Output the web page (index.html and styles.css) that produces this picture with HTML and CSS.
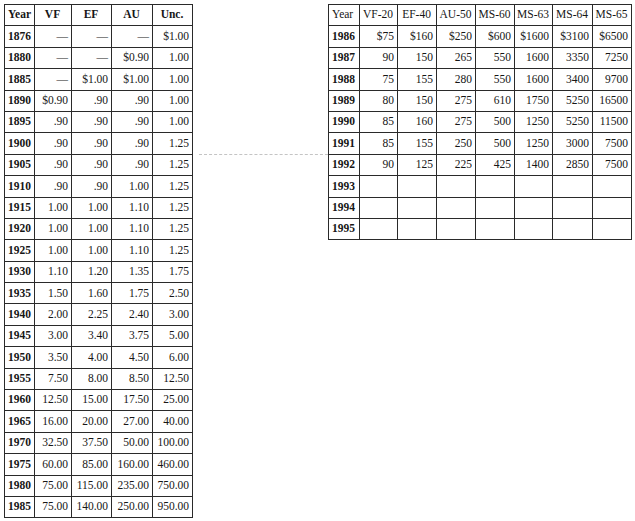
FILE: index.html
```html
<!DOCTYPE html>
<html>
<head>
<meta charset="utf-8">
<link rel="stylesheet" href="styles.css">
</head>
<body>
<div class="page">
  <table class="grid left">
    <colgroup><col class="c-year"><col class="c36"><col class="c40"><col class="c41"><col class="c40"></colgroup>
    <thead><tr><th class="yr">Year</th><th>VF</th><th>EF</th><th>AU</th><th>Unc.</th></tr></thead>
    <tbody>
      <tr><th class="yr">1876</th><td>—</td><td>—</td><td>—</td><td>$1.00</td></tr>
      <tr><th class="yr">1880</th><td>—</td><td>—</td><td>$0.90</td><td>1.00</td></tr>
      <tr><th class="yr">1885</th><td>—</td><td>$1.00</td><td>$1.00</td><td>1.00</td></tr>
      <tr><th class="yr">1890</th><td>$0.90</td><td>.90</td><td>.90</td><td>1.00</td></tr>
      <tr><th class="yr">1895</th><td>.90</td><td>.90</td><td>.90</td><td>1.00</td></tr>
      <tr><th class="yr">1900</th><td>.90</td><td>.90</td><td>.90</td><td>1.25</td></tr>
      <tr><th class="yr">1905</th><td>.90</td><td>.90</td><td>.90</td><td>1.25</td></tr>
      <tr><th class="yr">1910</th><td>.90</td><td>.90</td><td>1.00</td><td>1.25</td></tr>
      <tr><th class="yr">1915</th><td>1.00</td><td>1.00</td><td>1.10</td><td>1.25</td></tr>
      <tr><th class="yr">1920</th><td>1.00</td><td>1.00</td><td>1.10</td><td>1.25</td></tr>
      <tr><th class="yr">1925</th><td>1.00</td><td>1.00</td><td>1.10</td><td>1.25</td></tr>
      <tr><th class="yr">1930</th><td>1.10</td><td>1.20</td><td>1.35</td><td>1.75</td></tr>
      <tr><th class="yr">1935</th><td>1.50</td><td>1.60</td><td>1.75</td><td>2.50</td></tr>
      <tr><th class="yr">1940</th><td>2.00</td><td>2.25</td><td>2.40</td><td>3.00</td></tr>
      <tr><th class="yr">1945</th><td>3.00</td><td>3.40</td><td>3.75</td><td>5.00</td></tr>
      <tr><th class="yr">1950</th><td>3.50</td><td>4.00</td><td>4.50</td><td>6.00</td></tr>
      <tr><th class="yr">1955</th><td>7.50</td><td>8.00</td><td>8.50</td><td>12.50</td></tr>
      <tr><th class="yr">1960</th><td>12.50</td><td>15.00</td><td>17.50</td><td>25.00</td></tr>
      <tr><th class="yr">1965</th><td>16.00</td><td>20.00</td><td>27.00</td><td>40.00</td></tr>
      <tr><th class="yr">1970</th><td>32.50</td><td>37.50</td><td>50.00</td><td>100.00</td></tr>
      <tr><th class="yr">1975</th><td>60.00</td><td>85.00</td><td>160.00</td><td>460.00</td></tr>
      <tr><th class="yr">1980</th><td>75.00</td><td>115.00</td><td>235.00</td><td>750.00</td></tr>
      <tr><th class="yr">1985</th><td>75.00</td><td>140.00</td><td>250.00</td><td>950.00</td></tr>
    </tbody>
  </table>

  <div class="gutter"><div class="scanline"></div></div>

  <table class="grid right">
    <colgroup><col class="r-year"><col class="c38"><col class="c39"><col class="c39"><col class="c39"><col class="c38"><col class="c40"><col class="c39"></colgroup>
    <thead><tr class="plainhead"><th class="yr">Year</th><th>VF-20</th><th>EF-40</th><th>AU-50</th><th>MS-60</th><th>MS-63</th><th>MS-64</th><th>MS-65</th></tr></thead>
    <tbody>
      <tr><th class="yr">1986</th><td>$75</td><td>$160</td><td>$250</td><td>$600</td><td>$1600</td><td>$3100</td><td>$6500</td></tr>
      <tr><th class="yr">1987</th><td>90</td><td>150</td><td>265</td><td>550</td><td>1600</td><td>3350</td><td>7250</td></tr>
      <tr><th class="yr">1988</th><td>75</td><td>155</td><td>280</td><td>550</td><td>1600</td><td>3400</td><td>9700</td></tr>
      <tr><th class="yr">1989</th><td>80</td><td>150</td><td>275</td><td>610</td><td>1750</td><td>5250</td><td>16500</td></tr>
      <tr><th class="yr">1990</th><td>85</td><td>160</td><td>275</td><td>500</td><td>1250</td><td>5250</td><td>11500</td></tr>
      <tr><th class="yr">1991</th><td>85</td><td>155</td><td>250</td><td>500</td><td>1250</td><td>3000</td><td>7500</td></tr>
      <tr><th class="yr">1992</th><td>90</td><td>125</td><td>225</td><td>425</td><td>1400</td><td>2850</td><td>7500</td></tr>
      <tr><th class="yr">1993</th><td></td><td></td><td></td><td></td><td></td><td></td><td></td></tr>
      <tr><th class="yr">1994</th><td></td><td></td><td></td><td></td><td></td><td></td><td></td></tr>
      <tr><th class="yr">1995</th><td></td><td></td><td></td><td></td><td></td><td></td><td></td></tr>
    </tbody>
  </table>
</div>
</body>
</html>
```

FILE: styles.css
```css
html, body {
  margin: 0;
  padding: 0;
  background: #ffffff;
}

.page {
  display: flex;
  align-items: flex-start;
  padding: 4px 0 0 4px;
  font-family: "Liberation Serif", "DejaVu Serif", serif;
  font-size: 11.5px;
  color: #161616;
}

.grid {
  border-collapse: collapse;
  table-layout: fixed;
}

.grid th,
.grid td {
  border: 1px solid #2a2a2a;
  padding: 0 3px 0 2px;
  height: 20.4px;
  text-align: right;
  font-weight: normal;
  white-space: nowrap;
  overflow: hidden;
  line-height: 1;
}

.grid thead th {
  text-align: center;
  font-weight: bold;
}

.grid th.yr {
  text-align: left;
  font-weight: bold;
  padding-left: 3px;
}

.grid thead .plainhead th {
  font-weight: normal;
}

.left { width: 188px; }
.right { width: 304px; }

.c-year { width: 30px; }
.r-year { width: 31px; }
.c36 { width: 37px; }
.c38 { width: 38px; }
.c39 { width: 39px; }
.c40 { width: 40px; }
.c41 { width: 41px; }

.gutter {
  width: 135px;
  flex: none;
}

.scanline {
  margin-top: 150px;
  margin-left: 6px;
  border-top: 1px dashed #c4c4c4;
}
```
